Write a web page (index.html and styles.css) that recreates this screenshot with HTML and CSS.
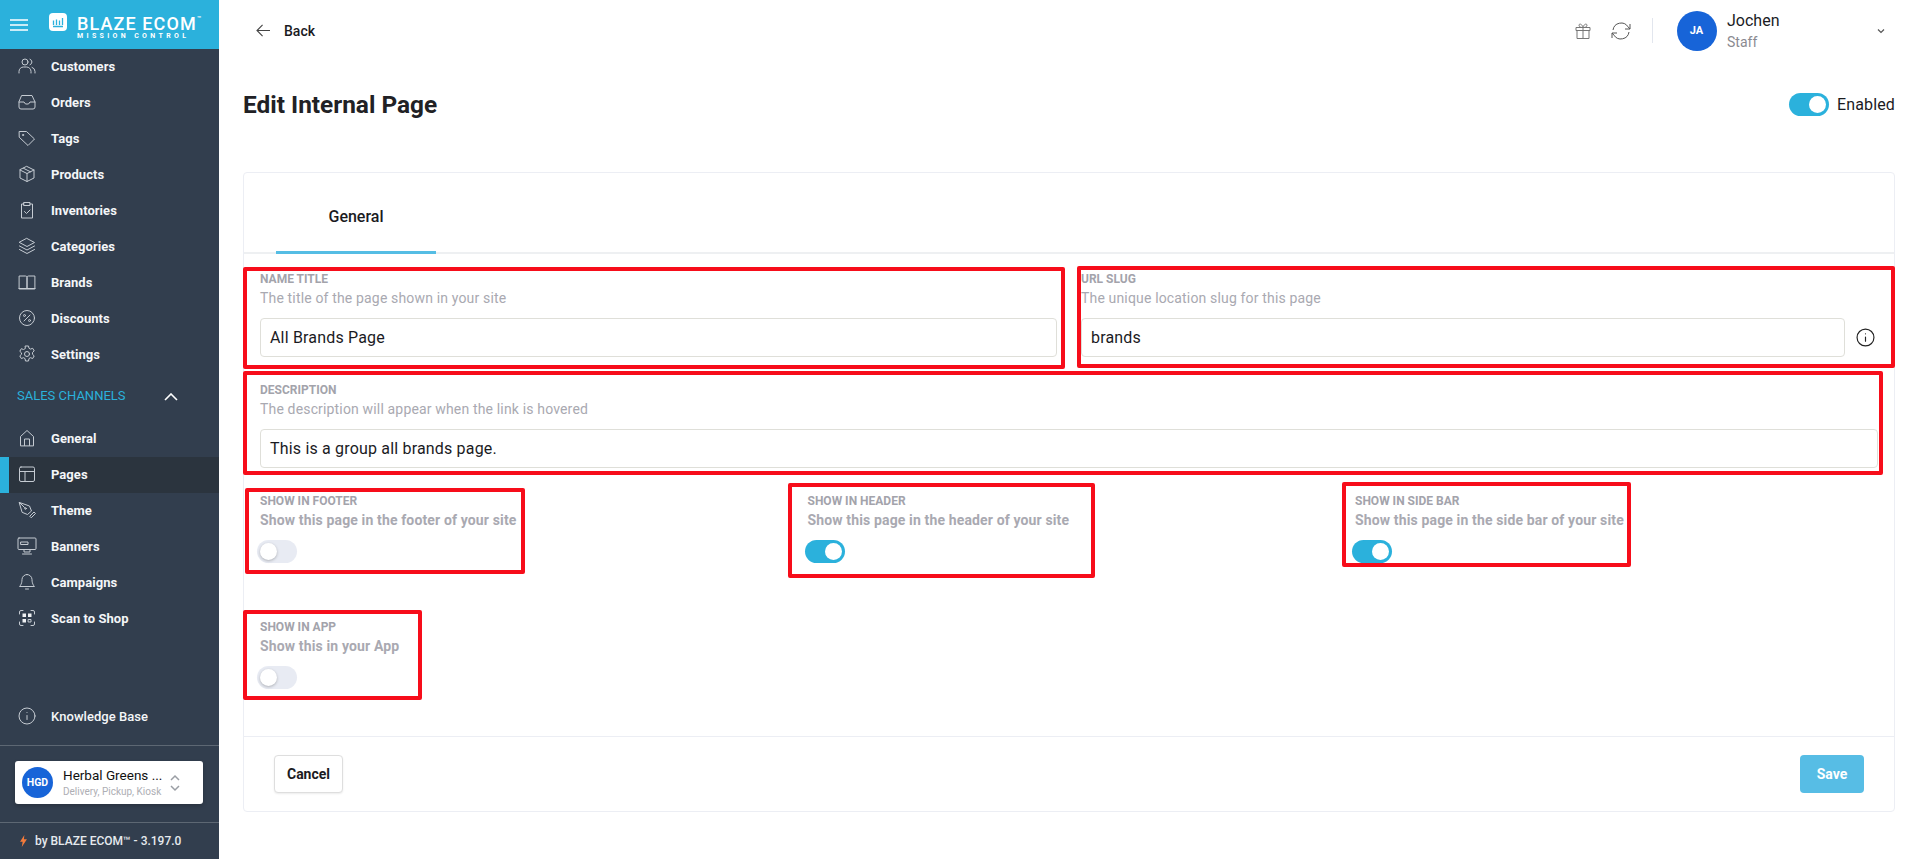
FILE: index.html
```html
<!DOCTYPE html>
<html lang="en">
<head>
<meta charset="utf-8">
<title>Edit Internal Page</title>
<link rel="stylesheet" href="styles.css">
</head>
<body>
<div class="app">
  <aside class="sidebar">
    <div class="brand">
      <svg class="burger" viewBox="0 0 18 12"><path d="M0 1h18M0 6h18M0 11h18"/></svg>
      <svg class="brand-mark" viewBox="0 0 18 18"><rect width="18" height="18" rx="4" fill="#fff"/><path d="M4 13.500h10M4.500 12V7.500M7.500 12V6.500M10.500 12V7.500M13.500 12V5" stroke="#2bb1dc" stroke-width="1.300" fill="none"/></svg>
      <div class="brand-text">
        <div class="brand-name">BLAZE ECOM<sup>™</sup></div>
        <div class="brand-sub">MISSION CONTROL</div>
      </div>
    </div>
    <nav class="nav">
      <a class="nav-item"><svg class="ico" viewBox="0 0 18 18"><circle cx="7" cy="5" r="3"/><path d="M1 16v-1.500a4.500 4.500 0 0 1 4.500-4.500h3a4.500 4.500 0 0 1 4.500 4.500V16M12 2.200a3 3 0 0 1 0 5.600M14 10.300a4.500 4.500 0 0 1 3 4.200V16"/></svg>Customers</a>
      <a class="nav-item"><svg class="ico" viewBox="0 0 18 18"><path d="M4 2.500h10L17 9v5a2 2 0 0 1-2 2H3a2 2 0 0 1-2-2V9zM1 9h5l1.500 2h3L12 9h5"/></svg>Orders</a>
      <a class="nav-item"><svg class="ico" viewBox="0 0 18 18"><path d="M1.500 2.500h7l8 7.500-6.500 6.500-8.500-8z"/><circle cx="5" cy="6" r=".6"/></svg>Tags</a>
      <a class="nav-item"><svg class="ico" viewBox="0 0 18 18"><path d="M9 1.500l7 3.500v8l-7 3.500L2 13V5zM2 5l7 3.500L16 5M9 8.500v8M5.500 3.300l7 3.500"/></svg>Products</a>
      <a class="nav-item"><svg class="ico" viewBox="0 0 18 18"><path d="M6 3H3.500v14h11V3H12M6 1.500h6v3H6zM6.500 10.500l2 2 3.500-3.500"/></svg>Inventories</a>
      <a class="nav-item"><svg class="ico" viewBox="0 0 18 18"><path d="M9 1.500l7.500 4L9 9.500l-7.500-4zM1.500 9L9 13l7.500-4M1.500 12.500l7.500 4 7.500-4"/></svg>Categories</a>
      <a class="nav-item"><svg class="ico" viewBox="0 0 18 18"><path d="M1.500 3h6a1.500 1.500 0 0 1 1.500 1.500V16H1.500zM16.500 3h-6A1.500 1.500 0 0 0 9 4.500V16h7.500zM1 15.500h16"/></svg>Brands</a>
      <a class="nav-item"><svg class="ico" viewBox="0 0 18 18"><circle cx="9" cy="9" r="7.500"/><path d="M12 6l-6 6"/><circle cx="6.500" cy="6.500" r="1"/><circle cx="11.500" cy="11.500" r="1"/></svg>Discounts</a>
      <a class="nav-item"><svg class="ico" viewBox="0 0 18 18"><circle cx="9" cy="9" r="2.500"/><path d="M7.500 1h3l.5 2.300 1.500.8 2.200-.8 1.500 2.600-1.700 1.600v1.800l1.700 1.600-1.500 2.600-2.200-.8-1.500.8-.5 2.500h-3l-.5-2.500-1.500-.8-2.200.8-1.500-2.600 1.700-1.600V7.900L1.800 6.300l1.500-2.600 2.200.8 1.500-.8z"/></svg>Settings</a>
      <div class="nav-section"><span>SALES CHANNELS</span><svg class="section-chevron" viewBox="0 0 14 8"><path d="M1 7l6-6 6 6"/></svg></div>
      <a class="nav-item"><svg class="ico" viewBox="0 0 18 18"><path d="M2.500 16.500V7.500L9 1.500l6.500 6v9zM6.500 16.500V10h5v6.500"/></svg>General</a>
      <a class="nav-item active"><svg class="ico" viewBox="0 0 18 18"><rect x="1.500" y="2" width="15" height="14.500" rx="1.500"/><path d="M1.500 6.500h15M7 6.500v10"/></svg>Pages</a>
      <a class="nav-item"><svg class="ico" viewBox="0 0 18 18"><path d="M1.500 1.500l10 3.500 2 5-4 3.500-5-2zM1.500 1.500l5 5M12 15l4-4 1.500 1.500-4 4z"/><circle cx="7.500" cy="7.500" r=".8"/></svg>Theme</a>
      <a class="nav-item"><svg class="ico wide" viewBox="0 0 20 18"><rect x="1" y="1" width="18" height="11.500" rx="1"/><path d="M4 5h7v2.500H4zM7 12.500v2.500h6v-2.500M5.500 17h9"/></svg>Banners</a>
      <a class="nav-item"><svg class="ico" viewBox="0 0 18 18"><path d="M9 1.500a5 5 0 0 0-5 5c0 5-2.500 7-2.500 7h15S14 11.500 14 6.500a5 5 0 0 0-5-5zM7.500 16h3"/></svg>Campaigns</a>
      <a class="nav-item"><svg class="ico" viewBox="0 0 18 18"><path d="M1.500 5V3a1.500 1.500 0 0 1 1.500-1.500h2M13 1.500h2A1.500 1.500 0 0 1 16.500 3v2M1.500 13v2A1.500 1.500 0 0 0 3 16.500h2M13 16.500h2a1.500 1.500 0 0 0 1.500-1.500v-2"/><path class="solid" d="M4.500 4.500h3.500v3.500H4.500zM10 4.500h3.500v3.500H10zM4.500 10h3.500v3.500H4.500z"/><path d="M10.500 10.500h2.500v2.500h-2.500z"/></svg>Scan to Shop</a>
    </nav>
    <a class="nav-item help"><svg class="ico" viewBox="0 0 18 18"><circle cx="9" cy="9" r="8"/><path d="M9 8.500v4M9 5.500h.01"/></svg>Knowledge Base</a>
    <div class="store-wrap">
      <div class="store">
        <div class="store-avatar">HGD</div>
        <div class="store-text">
          <div class="store-name">Herbal Greens ...</div>
          <div class="store-sub">Delivery, Pickup, Kiosk</div>
        </div>
        <svg class="store-chevrons" viewBox="0 0 10 18"><path d="M1 6l4-4 4 4M1 12l4 4 4-4"/></svg>
      </div>
    </div>
    <div class="version">
      <svg class="bolt" viewBox="0 0 8 14"><path d="M5 0L0 8h3l-1 6 6-9H4.500z"/></svg>
      <span>by BLAZE ECOM™ - 3.197.0</span>
    </div>
  </aside>

  <main class="main">
    <header class="topbar">
      <a class="back"><svg class="back-arrow" viewBox="0 0 16 14"><path d="M15 7H1.500M7 1L1 7l6 6"/></svg>Back</a>
      <div class="top-actions">
        <svg class="top-ico gift" viewBox="0 0 18 18"><path d="M2 5.500h14v3H2zM3 8.500h12v8H3zM9 5.500v11M9 5.500C7 5.500 5 5 5 3.200 5 1.500 8 1.500 9 5.500zM9 5.500c2 0 4-.5 4-2.300 0-1.700-3-1.700-4 2.300z"/></svg>
        <svg class="top-ico refresh" viewBox="0 0 22 18"><path d="M3 8a8.200 8.200 0 0 1 15-3.200L20 7M20 2v5h-5M19 10a8.200 8.200 0 0 1-15 3.200L2 11M2 16v-5h5"/></svg>
        <span class="top-sep"></span>
        <div class="user">
          <div class="user-avatar">JA</div>
          <div class="user-text">
            <div class="user-name">Jochen</div>
            <div class="user-role">Staff</div>
          </div>
          <svg class="user-chevron" viewBox="0 0 8 6"><path d="M1 1.500l3 3 3-3"/></svg>
        </div>
      </div>
    </header>

    <div class="title-row">
      <h1 class="title">Edit Internal Page</h1>
      <label class="enabled"><span class="toggle on"></span><span>Enabled</span></label>
    </div>

    <section class="card">
      <div class="tabs"><div class="tab">General</div></div>
      <div class="form">
        <div class="row-two">
          <div class="field">
            <div class="label">NAME TITLE</div>
            <div class="hint">The title of the page shown in your site</div>
            <div class="input">All Brands Page</div>
          </div>
          <div class="field">
            <div class="label">URL SLUG</div>
            <div class="hint">The unique location slug for this page</div>
            <div class="input-line">
              <div class="input">brands</div>
              <svg class="info" viewBox="0 0 18 18"><circle cx="9" cy="9" r="8"/><path d="M9 8.500v4M9 5.500h.01"/></svg>
            </div>
          </div>
        </div>
        <div class="field wide-field">
          <div class="label">DESCRIPTION</div>
          <div class="hint">The description will appear when the link is hovered</div>
          <div class="input">This is a group all brands page.</div>
        </div>
        <div class="switches">
          <div class="switch-field">
            <div class="label">SHOW IN FOOTER</div>
            <div class="hint strong">Show this page in the footer of your site</div>
            <span class="toggle"></span>
          </div>
          <div class="switch-field">
            <div class="label">SHOW IN HEADER</div>
            <div class="hint strong">Show this page in the header of your site</div>
            <span class="toggle on"></span>
          </div>
          <div class="switch-field">
            <div class="label">SHOW IN SIDE BAR</div>
            <div class="hint strong">Show this page in the side bar of your site</div>
            <span class="toggle on"></span>
          </div>
          <div class="switch-field">
            <div class="label">SHOW IN APP</div>
            <div class="hint strong">Show this in your App</div>
            <span class="toggle"></span>
          </div>
        </div>
      </div>
      <div class="card-footer">
        <button class="btn-cancel" type="button">Cancel</button>
        <button class="btn-save" type="button">Save</button>
      </div>
    </section>
  </main>
</div>
<div class="mark mark-name"></div>
<div class="mark mark-url"></div>
<div class="mark mark-desc"></div>
<div class="mark mark-footer"></div>
<div class="mark mark-header"></div>
<div class="mark mark-side"></div>
<div class="mark mark-app"></div>
</body>
</html>
```

FILE: styles.css
```css
* { box-sizing: border-box; }
html, body { margin: 0; height: 859px; overflow: hidden; background: #fff; }
body { font-family: Roboto, "Liberation Sans", sans-serif; color: #1b1b1f; position: relative; }
.app { display: flex; width: 1909px; height: 859px; }

/* sidebar */
.sidebar { width: 219px; flex: none; background: #323e4e; display: flex; flex-direction: column; height: 859px; }
.brand { height: 49px; flex: none; background: #2bb1dc; display: flex; align-items: center; padding-left: 10px; color: #fff; }
.burger { width: 18px; height: 12px; stroke: #fff; stroke-width: 1.6; fill: none; }
.brand-mark { width: 18px; height: 18px; margin-left: 21px; margin-top: -5px; }
.brand-text { margin-left: 10px; width: 125px; padding-top: 7px; }
.brand-name { font-size: 18px; font-weight: 500; letter-spacing: 1.1px; line-height: 16px; white-space: nowrap; }
.brand-name sup { font-size: 7px; line-height: 0; vertical-align: 9px; letter-spacing: 0; }
.brand-sub { font-size: 7px; font-weight: 700; letter-spacing: 3.35px; line-height: 7px; margin-top: 1px; white-space: nowrap; }
.nav { flex: 1; display: flex; flex-direction: column; }
.nav-item { height: 36px; flex: none; display: flex; align-items: center; padding: 0 0 2px 18px; font-size: 13px; font-weight: 700; letter-spacing: .05px; color: #f4f6f8; position: relative; }
.nav-item.active { background: #2b343e; }
.nav-item.active::before { content: ""; position: absolute; left: 0; top: 0; bottom: 0; width: 9px; background: #2bb1dc; }
.ico { width: 18px; height: 18px; margin-right: 15px; flex: none; fill: none; stroke: #c5cbd2; stroke-width: 1; stroke-linecap: round; stroke-linejoin: round; position: relative; }
.ico .solid { fill: #f0f2f4; stroke: none; }
.ico.wide { width: 20px; margin-left: -1px; margin-right: 14px; }
.nav-section { height: 48px; flex: none; display: flex; align-items: center; padding: 0 0 4px 17px; font-size: 13px; color: #2bb1dc; }
.section-chevron { width: 14px; height: 8px; margin-left: 38px; margin-top: 4px; fill: none; stroke: #fff; stroke-width: 1.6; }
.help { font-weight: 500; margin-bottom: 10px; }
.help .ico { stroke-width: 1; }
.store-wrap { height: 78px; flex: none; border-top: 1px solid #5d6773; border-bottom: 1px solid #5d6773; padding: 15px 16px 0 15px; }
.store { height: 43px; width: 188px; background: #fff; border-radius: 3px; display: flex; align-items: center; padding-left: 7px; box-shadow: 0 2px 4px rgba(0,0,0,.2); }
.store-avatar { width: 31px; height: 31px; border-radius: 50%; background: #1764d8; color: #fff; font-size: 10.500px; font-weight: 700; display: flex; align-items: center; justify-content: center; flex: none; }
.store-text { margin-left: 10px; width: 103px; }
.store-name { font-size: 13.500px; line-height: 16px; color: #111; white-space: nowrap; }
.store-sub { font-size: 10px; line-height: 13px; margin-top: 2px; color: #aeaeb4; white-space: nowrap; }
.store-chevrons { width: 10px; height: 18px; margin-left: 4px; fill: none; stroke: #9a9ea4; stroke-width: 1.5; flex: none; }
.version { flex: none; height: 36px; display: flex; align-items: center; padding-left: 20px; font-size: 12px; font-weight: 500; color: #e6eaee; }
.bolt { width: 7px; height: 12px; fill: #f47b3b; margin-right: 8px; }

/* main */
.main { flex: 1; min-width: 0; padding: 0 14px 0 24px; }
.topbar { height: 61px; display: flex; align-items: center; justify-content: space-between; padding-left: 13px; }
.back { display: flex; align-items: center; font-size: 14px; font-weight: 500; color: #1b1b1f; }
.back-arrow { width: 15px; height: 13px; margin-right: 13px; fill: none; stroke: #444; stroke-width: 1.2; }
.top-actions { display: flex; align-items: center; margin-right: 10.500px; }
.top-ico { fill: none; stroke: #777; stroke-width: 1; }
.gift { width: 18px; height: 18px; }
.refresh { width: 22px; height: 18px; margin-left: 18px; stroke: #555; }
.top-sep { width: 1px; height: 25px; background: #e2e6ee; margin-left: 20px; }
.user { display: flex; align-items: center; margin-left: 24px; }
.user-avatar { width: 40px; height: 40px; border-radius: 50%; background: #1764d8; color: #fff; font-size: 11px; font-weight: 700; display: flex; align-items: center; justify-content: center; }
.user-text { margin-left: 10.500px; width: 149.500px; }
.user-name { font-size: 16px; line-height: 19px; color: #1b1b1f; }
.user-role { font-size: 14px; line-height: 17px; margin-top: 4px; color: #8a8a90; }
.user-chevron { width: 8px; height: 6px; fill: none; stroke: #555; stroke-width: 1.2; }
.title-row { height: 88px; padding-bottom: 2px; display: flex; align-items: center; justify-content: space-between; }
.title { margin: 0; font-size: 24.400px; font-weight: 700; color: #212125; }
.enabled { display: flex; align-items: center; font-size: 16px; letter-spacing: .15px; color: #1b1b1f; gap: 8px; }

.toggle { display: block; width: 40px; height: 23px; border-radius: 12px; background: #e8ebf3; position: relative; flex: none; }
.toggle::after { content: ""; position: absolute; left: 3px; top: 3px; width: 17px; height: 17px; border-radius: 50%; background: #fff; box-shadow: 0 1px 3px rgba(0,0,0,.25); }
.toggle.on { background: #2bb1dc; }
.toggle.on::after { left: 20px; box-shadow: none; }

/* card */
.card { height: 640px; margin-top: 23px; border: 1px solid #eceef4; border-radius: 4px; display: flex; flex-direction: column; width: 1652px; }
.tabs { height: 81px; flex: none; border-bottom: 2px solid #eef0f2; padding-left: 32px; }
.tab { width: 160px; height: 81px; border-bottom: 3px solid #55bde4; display: flex; align-items: center; justify-content: center; font-size: 16px; font-weight: 500; color: #1b1b1f; padding-top: 8px; }
.form { flex: 1; min-height: 0; padding: 18px 0 0 16px; }
.row-two { display: grid; grid-template-columns: 821px 804px; height: 111px; }
.row-two > .field:first-child .input { width: 797px; }
.label { font-size: 12px; font-weight: 700; color: #a3a3ab; line-height: 14px; }
.hint { font-size: 14px; color: #a9a9b1; line-height: 16px; margin-top: 4px; letter-spacing: .16px; }
.hint.strong { font-weight: 700; font-size: 14px; letter-spacing: .14px; }
.input { height: 39px; border: 1px solid #dfdfd9; border-radius: 4px; display: flex; align-items: center; padding-left: 9px; font-size: 16px; letter-spacing: .18px; color: #1b1b1f; margin-top: 12px; background: #fff; }
.input-line { display: flex; align-items: center; }
.input-line .input { width: 764px; flex: none; }
.info { width: 19px; height: 19px; margin: 12px 0 0 11px; fill: none; stroke: #222; stroke-width: 1.100; stroke-linecap: round; }
.wide-field { width: 1618px; height: 111px; }
.switches { display: grid; grid-template-columns: 547.500px 547.500px 500px; grid-auto-rows: 126px; }
.switch-field .toggle { margin: 12px 0 0 -3px; }
.card-footer { height: 75px; flex: none; border-top: 1px solid #eceef4; display: flex; align-items: center; justify-content: space-between; padding: 0 30px 0 30px; }
.btn-cancel { width: 69px; height: 38px; background: #fff; border: 1px solid #dedede; border-radius: 4px; font: 700 14px Roboto, sans-serif; color: #1b1b1f; box-shadow: 0 1px 2px rgba(0,0,0,.08); }
.btn-save { width: 64px; height: 38px; background: #57bde5; border: 0; border-radius: 4px; font: 700 14px Roboto, sans-serif; color: #fff; }

/* red review annotations drawn over the screenshot */
.mark { position: absolute; border: 4px solid #f70d1a; border-radius: 2px; pointer-events: none; }
.mark-name { left: 243px; top: 267px; width: 822px; height: 102px; }
.mark-url { left: 1077px; top: 266px; width: 818px; height: 102px; }
.mark-desc { left: 243px; top: 371px; width: 1640px; height: 104px; }
.mark-footer { left: 245px; top: 488px; width: 280px; height: 86px; }
.mark-header { left: 788px; top: 483px; width: 307px; height: 95px; }
.mark-side { left: 1342px; top: 482px; width: 289px; height: 85px; }
.mark-app { left: 243px; top: 610px; width: 179px; height: 90px; }
```
